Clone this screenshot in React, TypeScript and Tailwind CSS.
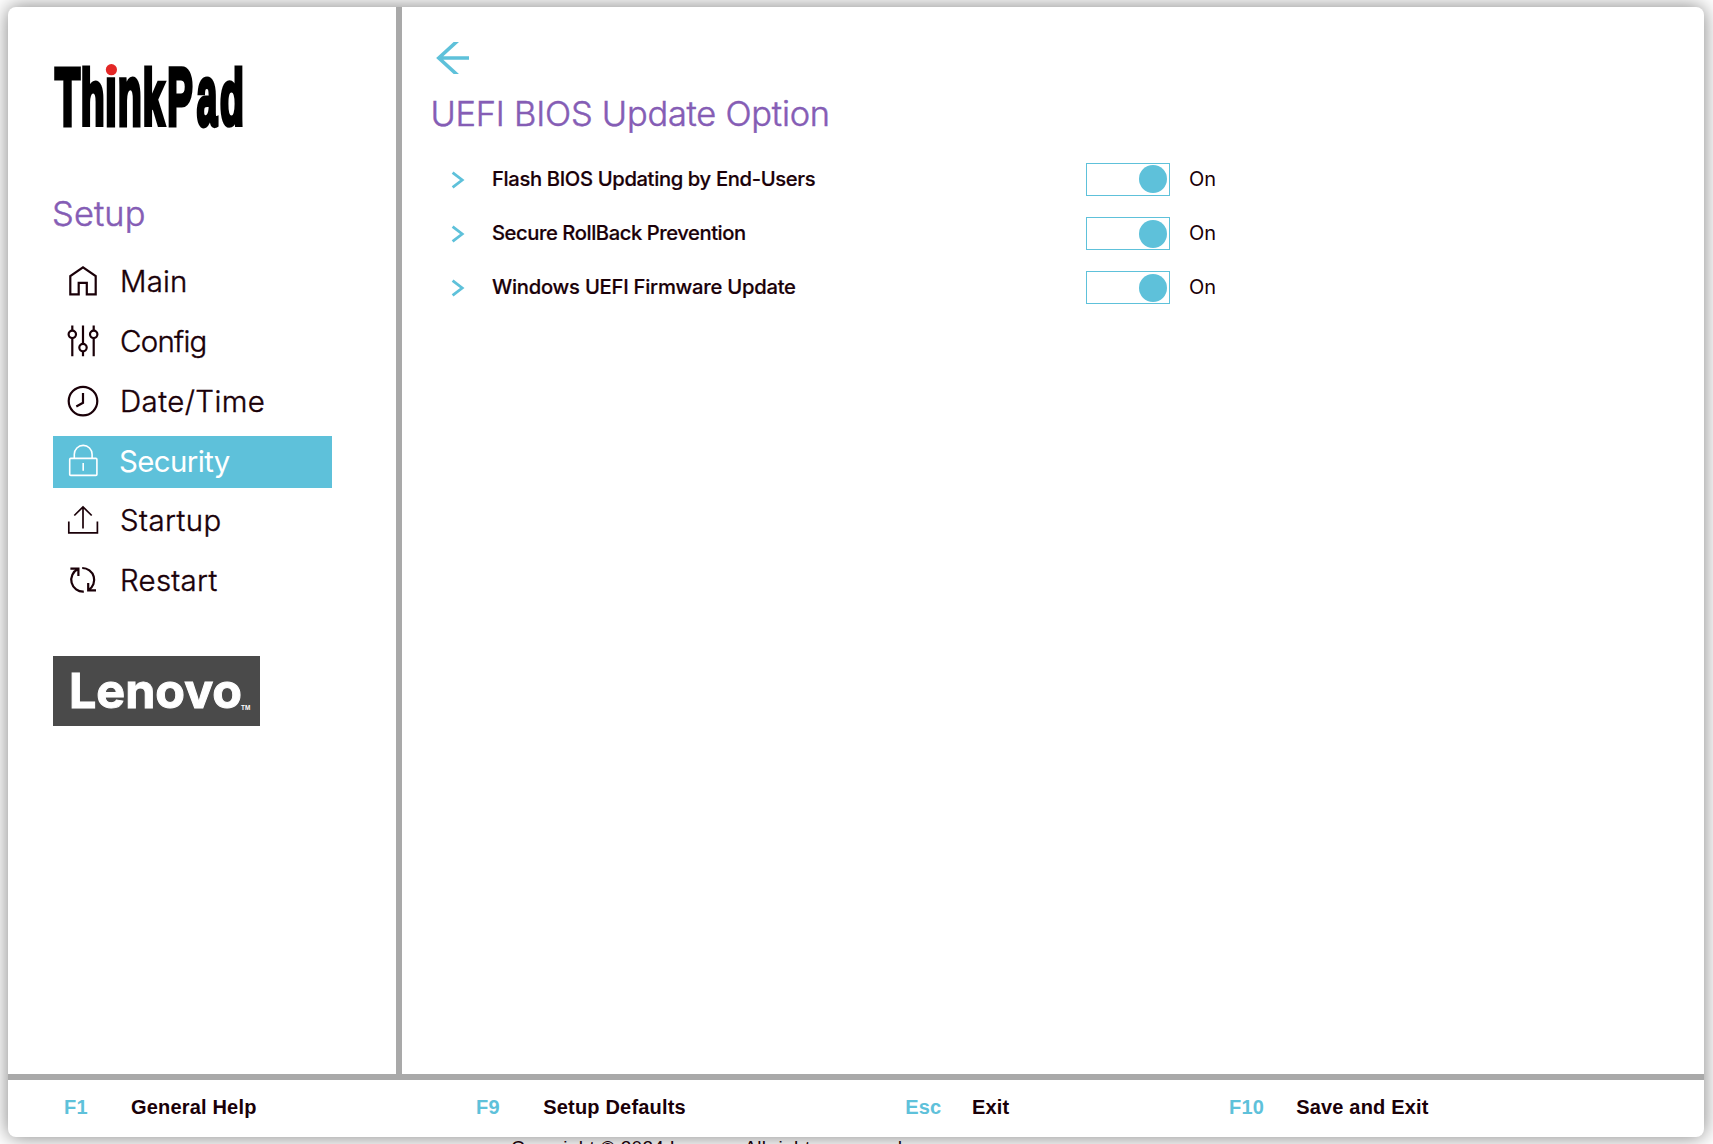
import React, { type ReactNode } from "react";

type NavItem = { label: string; spacing: string; icon: ReactNode; active?: boolean };

function Icon({ children, width = 2.2 }: { children: ReactNode; width?: number }) {
  return (
    <svg
      viewBox="0 0 32 32"
      className="size-8 shrink-0 overflow-visible"
      fill="none"
      stroke="currentColor"
      strokeWidth={width}
    >
      {children}
    </svg>
  );
}

const navItems: NavItem[] = [
  {
    label: "Main",
    spacing: "tracking-[0.2px]",
    icon: (
      <Icon>
        <path d="M3.3 28.4V10L16 1.3 28.7 10v18.4h-8.9V16.8h-8.1v11.6z" />
      </Icon>
    ),
  },
  {
    label: "Config",
    spacing: "tracking-[-0.7px]",
    icon: (
      <Icon>
        <path d="M5.3-.4v5M5.3 12v18.3M16-.4v18.3M16 25.3v5M26.7-.4v5M26.7 12v18.3" />
        <circle cx="5.3" cy="8.3" r="3.7" />
        <circle cx="16" cy="21.6" r="3.7" />
        <circle cx="26.7" cy="8.3" r="3.7" />
      </Icon>
    ),
  },
  {
    label: "Date/Time",
    spacing: "tracking-[0.45px]",
    icon: (
      <Icon>
        <circle cx="16" cy="15.1" r="14.3" />
        <path d="M16 7.1v9.7l-6.7 3.7" />
      </Icon>
    ),
  },
  {
    label: "Security",
    spacing: "tracking-[-0.6px]",
    active: true,
    icon: (
      <Icon width={1.6}>
        <rect x="2.7" y="12.4" width="27.2" height="17" rx="1" />
        <path d="M7.3 12.4V8.3a8.9 8.9 0 0 1 17.8 0v4.1M16.2 17v7.7" />
      </Icon>
    ),
  },
  {
    label: "Startup",
    spacing: "tracking-[0.46px]",
    icon: (
      <Icon width={1.7}>
        <path d="M1.8 16.5v11.3h28.6V16.5M16 23.5V2M7.3 10.5 16 1.9l8.7 8.6" />
      </Icon>
    ),
  },
  {
    label: "Restart",
    spacing: "tracking-[0.3px]",
    icon: (
      <Icon>
        <path d="M3.4 3.6h8V11M11 4a11.9 11.9 0 0 0 5.8 22.6M15.2 3a11.9 11.9 0 0 1 6.4 22M21.2 18v7.4h7.8" />
      </Icon>
    ),
  },
];

const options = [
  { label: "Flash BIOS Updating by End-Users", spacing: "tracking-[-0.35px]", knob: "mt-px" },
  { label: "Secure RollBack Prevention", spacing: "tracking-[-0.43px]", knob: "mt-0.5" },
  { label: "Windows UEFI Firmware Update", spacing: "tracking-[-0.24px]", knob: "mt-0.5" },
];

const shortcuts = [
  ["F1", "General Help"],
  ["F9", "Setup Defaults"],
  ["Esc", "Exit"],
  ["F10", "Save and Exit"],
];

function ThinkPadLogo() {
  return (
    <svg viewBox="0 0 190 70" className="ml-[46px] mt-[53px] h-[70px] w-[190px] overflow-visible" aria-label="ThinkPad">
      <text
        transform="scale(0.5 1)"
        y="65.2"
        fontFamily="Liberation Sans"
        fontWeight="700"
        stroke="#000"
        strokeWidth="5"
        fontSize="78"
      >
        <tspan x="1.8" fontSize="82">T</tspan>
        <tspan x="53.3">h</tspan>
        <tspan x="102" fontSize="85">ı</tspan>
        <tspan x="127.5" fontSize="85" textLength="48" lengthAdjust="spacingAndGlyphs">n</tspan>
        <tspan x="177.3">k</tspan>
        <tspan x="226.4" fontSize="82" textLength="51" lengthAdjust="spacingAndGlyphs">P</tspan>
        <tspan x="285.5" fontSize="85" textLength="41" lengthAdjust="spacingAndGlyphs">a</tspan>
        <tspan x="332">d</tspan>
      </text>
      <circle cx="57.4" cy="9.7" r="5.6" fill="#e32726" />
    </svg>
  );
}

function LenovoLogo() {
  return (
    <svg viewBox="0 0 207 70" className="ml-[45px] mt-[48.6px] h-[70px] w-[207px] bg-[#4a4a4a]" aria-label="Lenovo">
      <text
        x="16"
        y="51.5"
        fontFamily="Inter"
        fontWeight="700"
        fontSize="48"
        fill="#fff"
        stroke="#fff"
        strokeWidth="1"
        textLength="173"
        lengthAdjust="spacingAndGlyphs"
      >
        Lenovo
      </text>
      <text x="188" y="53.5" fontFamily="Liberation Sans" fontWeight="700" fontSize="6.4" fill="#fff">
        TM
      </text>
    </svg>
  );
}

export default function App() {
  return (
    <div className="h-[1144px] w-[1713px] overflow-hidden bg-white pl-2 pt-[7px] font-['Inter',sans-serif] text-[#1a0008]">
      <div className="flex h-[1130px] w-[1696px] flex-col rounded-lg bg-white shadow-[0_0_20px_rgba(0,0,0,0.5)]">
        <div className="flex h-[1067px]">
          <aside className="w-[388px] shrink-0">
            <ThinkPadLogo />
            <h2 className="ml-[44px] mt-[64px] text-[34.4px] font-light leading-10 tracking-[0.15px] text-[#855db5] [-webkit-text-stroke:0.5px]">
              Setup
            </h2>
            <nav className="ml-[45px] mt-[22.2px] flex w-[279px] flex-col gap-[7.8px]">
              {navItems.map((item) => (
                <a
                  key={item.label}
                  className={
                    item.active
                      ? "flex h-[52px] items-center gap-[21px] bg-[#5ec1da] pl-3.5 text-white"
                      : "flex h-[52px] items-center gap-[21px] pl-3.5"
                  }
                >
                  {item.icon}
                  <span
                    className={`text-[29.4px] leading-9 ${
                      item.active ? "-ml-px font-normal" : "font-light [-webkit-text-stroke:0.4px]"
                    } ${item.spacing}`}
                  >
                    {item.label}
                  </span>
                </a>
              ))}
            </nav>
            <LenovoLogo />
          </aside>
          <main className="grow border-l-6 border-[#a9a9a9]">
            <svg viewBox="0 0 33 32" className="ml-[34px] mt-[35px] h-8 w-[33px]" fill="none" stroke="#5ec1da" strokeWidth="3.6">
              <path d="M22.5-2 2.8 16l19.7 18M2 16h31" />
            </svg>
            <h1 className="ml-[28.5px] mt-[19.5px] text-[34.4px] font-light leading-10 tracking-[-0.22px] text-[#855db5] [-webkit-text-stroke:0.5px]">
              UEFI BIOS Update Option
            </h1>
            <ul className="mt-[19px]">
              {options.map((option) => (
                <li key={option.label} className="flex h-[54px] items-center pl-[49px]">
                  <svg viewBox="0 0 14 18" className="h-[18px] w-3.5 shrink-0" fill="none" stroke="#5ec1da" strokeWidth="2.8">
                    <path d="M1.6 1.6 11.2 9l-9.6 7.4" />
                  </svg>
                  <span
                    className={`w-[621px] pb-[2px] pl-[27px] text-[20.2px] font-medium leading-6 [-webkit-text-stroke:0.2px] ${option.spacing}`}
                  >
                    {option.label}
                  </span>
                  <span className="flex h-[33px] w-[84px] justify-end border border-[#5ec1da] pr-0.5">
                    <span className={`size-7 rounded-full bg-[#5ec1da] ${option.knob}`} />
                  </span>
                  <span className="ml-[19px] pb-px text-xl leading-6">On</span>
                </li>
              ))}
            </ul>
          </main>
        </div>
        <footer className="grid h-[63px] grid-cols-[67px_345px_67.3px_362px_66.7px_257px_67.2px_auto] items-center border-t-6 border-[#a9a9a9] pb-1 pl-[56px] font-['Liberation_Sans',sans-serif] text-xl font-bold tracking-[0.18px]">
          {shortcuts.map(([key, label]) => (
            <React.Fragment key={key}>
              <span className="text-[#5ec1da]">{key}</span>
              <span>{label}</span>
            </React.Fragment>
          ))}
        </footer>
      </div>
      <p className="relative pl-[503px] font-['Liberation_Sans',sans-serif] text-[19px] leading-[22px] tracking-[0.32px]">
        Copyright © 2024 Lenovo. All rights reserved.
      </p>
    </div>
  );
}
